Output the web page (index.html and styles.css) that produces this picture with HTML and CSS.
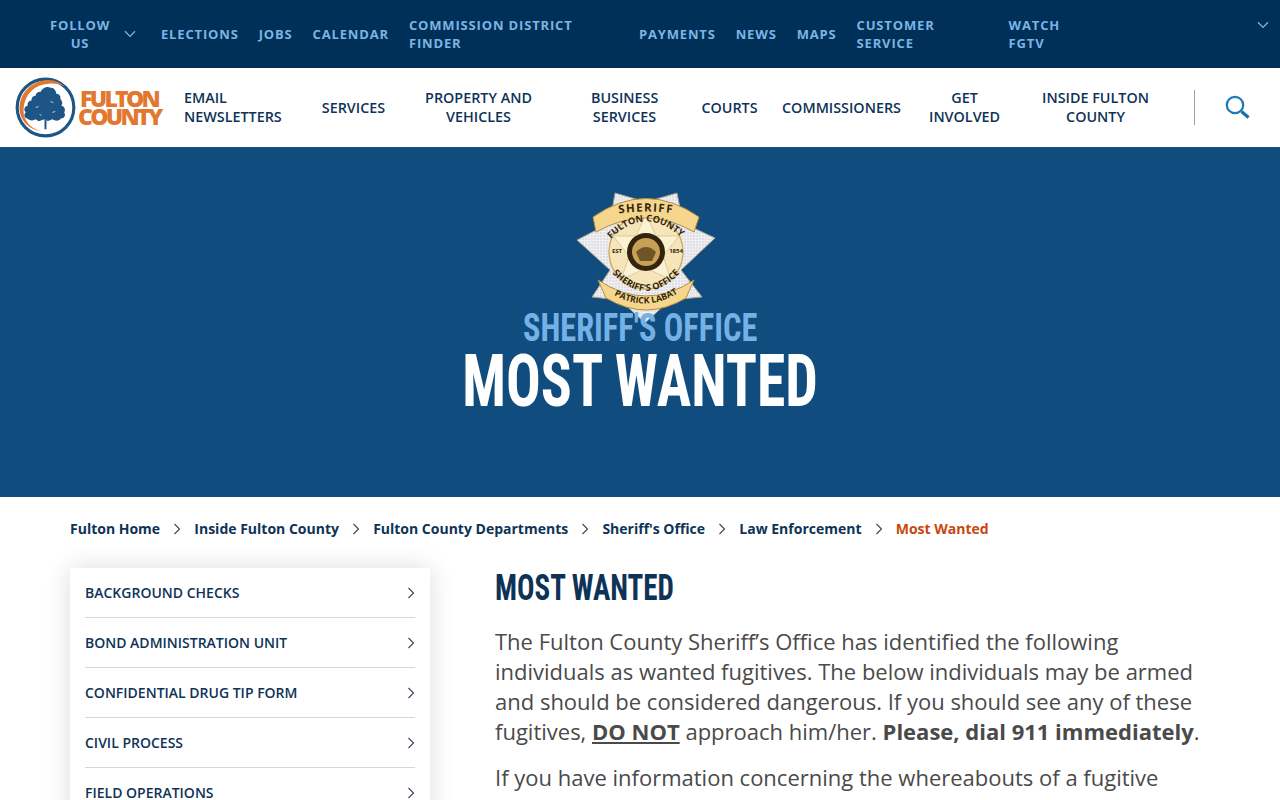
FILE: index.html
```html
<!DOCTYPE html>
<html lang="en">
<head>
<meta charset="utf-8">
<title>Most Wanted</title>
<link rel="stylesheet" href="styles.css">
</head>
<body>
<div class="topbar">
  <a class="top-item follow">FOLLOW<br>US</a>
  <svg class="chev-down follow-chev" viewBox="0 0 12 8"><path d="M1 1.2 6 6.4 11 1.2"/></svg>
  <a class="top-item">ELECTIONS</a>
  <a class="top-item">JOBS</a>
  <a class="top-item">CALENDAR</a>
  <a class="top-item w-commission">COMMISSION DISTRICT FINDER</a>
  <a class="top-item">PAYMENTS</a>
  <a class="top-item">NEWS</a>
  <a class="top-item">MAPS</a>
  <a class="top-item w-customer">CUSTOMER<br>SERVICE</a>
  <a class="top-item">WATCH<br>FGTV</a>
  <svg class="chev-down end-chev" viewBox="0 0 12 8"><path d="M1 1.2 6 6.4 11 1.2"/></svg>
</div>
<header class="mainnav">
  <a class="logo">
    <svg class="logo-mark" viewBox="0 0 62 62">
      <circle cx="31" cy="31" r="28.8" fill="none" stroke="#1d5587" stroke-width="3.2"/>
      <path d="M5 36C2 19 16 3 34 3 41 3 47 6 51 10 45 7 39 6 33 7 17 8 7 22 9 38 11 47 18 53 27 55 17 54 7 47 5 36Z" fill="#e2772f"/>
      <path d="M30 53V43L24 45 21 43C18 45 14 44 12 42 9 41 9 37 11 36 8 33 10 30 13 29 12 26 15 24 17 24 16 21 19 19 21 19 21 16 24 15 26 15 28 11 33 9 36 11 39 10 42 14 42 17 45 17 47 20 46 22 48 24 49 27 47 29 50 30 52 33 50 36 52 39 50 42 47 42 45 45 41 45 38 43L33 45 32 43V53Z" fill="#1d5587"/>
      <path d="M21 31l3-1M36 25l3 1M25 38l2 1M38 36l3-1" stroke="#fff" stroke-width=".7"/>
    </svg>
    <span class="logo-text">FULTON<br><span class="logo-line2">COUNTY</span></span>
  </a>
  <a class="nav-item nav-email">EMAIL<br>NEWSLETTERS</a>
  <a class="nav-item nav-single nav-services">SERVICES</a>
  <a class="nav-item nav-property">PROPERTY AND<br>VEHICLES</a>
  <a class="nav-item nav-business">BUSINESS<br>SERVICES</a>
  <a class="nav-item nav-single nav-courts">COURTS</a>
  <a class="nav-item nav-single nav-comm">COMMISSIONERS</a>
  <a class="nav-item nav-get">GET<br>INVOLVED</a>
  <a class="nav-item nav-inside">INSIDE FULTON<br>COUNTY</a>
  <span class="nav-divider"></span>
  <svg class="search" viewBox="0 0 26 26"><circle cx="10" cy="10" r="8.2" fill="none" stroke="#1b7ab8" stroke-width="2.2"/><path d="M16.5 16.5 23.5 22.5" stroke="#1b6ea6" stroke-width="3.2" fill="none"/></svg>
</header>
<section class="hero">
  <svg class="badge" viewBox="0 0 140 134">
    <defs>
      <pattern id="speck" width="3" height="3" patternUnits="userSpaceOnUse"><rect width="3" height="3" fill="#f0f0f3"/><circle cx="1" cy="1" r=".7" fill="#c2c4cc"/></pattern>
      <path id="t1" d="M39 24Q70 19 101 24"/>
      <path id="t2" d="M34 50Q68 14 106 48"/>
      <path id="t3" d="M30 76Q70 126 110 76"/>
      <path id="t4" d="M38 105Q70 123 102 103"/>
    </defs>
    <polygon points="39,3 70,12 101,3 107,33 139,48 105,80 126,107 94,110 69,133 44,110 16,107 34,80 1,50 34,33" fill="url(#speck)" stroke="#a89f8b" stroke-width="1"/>
    <circle cx="70" cy="62" r="37" fill="#f6e5b8" stroke="#cfac66" stroke-width="1.5"/>
    <polygon points="70,24 80,46 103,46 87,66 95,90 70,78 45,90 53,66 37,46 60,46" fill="#fbf1d3" stroke="#dcc289" stroke-width=".8"/>
    <path d="M20 42 17 27Q70 -10 123 27L118 42Q70 14 20 42Z" fill="#f5d68c" stroke="#b08c45"/>
    <path d="M22 90 30 108Q70 132 110 108L118 90Q70 122 22 90Z" fill="#f5d68c" stroke="#b08c45"/>
    <circle cx="70" cy="62" r="19" fill="#33240d"/>
    <circle cx="70" cy="62" r="14" fill="#c8a055"/>
    <path d="M60 62Q70 52 80 62L76 71H64Z" fill="#6d5526"/>
    <text class="badge-t b1"><textPath href="#t1" startOffset="50%">SHERIFF</textPath></text>
    <text class="badge-t b2"><textPath href="#t2" startOffset="50%">FULTON COUNTY</textPath></text>
    <text class="badge-t b2"><textPath href="#t3" startOffset="50%">SHERIFF'S OFFICE</textPath></text>
    <text class="badge-t b3"><textPath href="#t4" startOffset="50%">PATRICK LABAT</textPath></text>
    <text class="badge-t b4" x="41" y="63">EST</text>
    <text class="badge-t b4" x="100" y="63">1854</text>
  </svg>
  <div class="hero-sub">SHERIFF'S OFFICE</div>
  <div class="hero-title">MOST WANTED</div>
</section>
<nav class="crumbs">
  <a>Fulton Home</a><svg class="chev" viewBox="0 0 8 12"><path d="M1.5 1 6.5 6 1.5 11"/></svg>
  <a>Inside Fulton County</a><svg class="chev" viewBox="0 0 8 12"><path d="M1.5 1 6.5 6 1.5 11"/></svg>
  <a>Fulton County Departments</a><svg class="chev" viewBox="0 0 8 12"><path d="M1.5 1 6.5 6 1.5 11"/></svg>
  <a>Sheriff's Office</a><svg class="chev" viewBox="0 0 8 12"><path d="M1.5 1 6.5 6 1.5 11"/></svg>
  <a>Law Enforcement</a><svg class="chev" viewBox="0 0 8 12"><path d="M1.5 1 6.5 6 1.5 11"/></svg>
  <a class="current">Most Wanted</a>
</nav>
<main class="content">
  <aside class="side">
    <a class="side-item">BACKGROUND CHECKS<svg class="chev" viewBox="0 0 8 12"><path d="M1.5 1 6.5 6 1.5 11"/></svg></a>
    <a class="side-item">BOND ADMINISTRATION UNIT<svg class="chev" viewBox="0 0 8 12"><path d="M1.5 1 6.5 6 1.5 11"/></svg></a>
    <a class="side-item">CONFIDENTIAL DRUG TIP FORM<svg class="chev" viewBox="0 0 8 12"><path d="M1.5 1 6.5 6 1.5 11"/></svg></a>
    <a class="side-item">CIVIL PROCESS<svg class="chev" viewBox="0 0 8 12"><path d="M1.5 1 6.5 6 1.5 11"/></svg></a>
    <a class="side-item">FIELD OPERATIONS<svg class="chev" viewBox="0 0 8 12"><path d="M1.5 1 6.5 6 1.5 11"/></svg></a>
  </aside>
  <article class="body">
    <h1>MOST WANTED</h1>
    <p>The Fulton County Sheriff’s Office has identified the following individuals as wanted fugitives. The below individuals may be armed and should be considered dangerous. If you should see any of these fugitives, <strong><u>DO NOT</u></strong> approach him/her. <strong>Please, dial 911 immediately</strong>.</p>
    <p>If you have information concerning the whereabouts of a fugitive named on this website, it may be submitted anonymously through the Sheriff's Office.</p>
  </article>
</main>
</body>
</html>
```
FILE: styles.css
```css
* { box-sizing: border-box; }
html, body { margin: 0; height: 800px; overflow: hidden; }
body { font-family: "Open Sans", sans-serif; color: #4a4a4a; background: #fff; }
a { color: inherit; text-decoration: none; }

.topbar { height: 68px; background: #003058; padding: 0 10px 0 50px; display: flex; align-items: center; gap: 20px; position: relative; }
.top-item { font-size: 13px; font-weight: 700; line-height: 18px; letter-spacing: .84px; color: #7cb4e2; white-space: normal; }
.follow { text-align: center; width: 60px; flex: none; }
.follow-chev { margin-left: -6px; margin-right: 5px; }
.chev-down { width: 12px; height: 8px; fill: none; stroke: #7cb4e2; stroke-width: 1.3; flex: none; }
.end-chev { position: absolute; right: 11px; top: 21px; }
.w-commission { width: 210px; flex: none; }
.w-customer { width: 132px; flex: none; }

.mainnav { height: 80px; border-bottom: 1px solid #1d5587; display: flex; align-items: center; padding-left: 15px; background: #fff; }
.logo { display: flex; align-items: center; width: 169px; flex: none; }
.logo-mark { width: 61px; height: 61px; flex: none; }
.logo-text { font-family: "Open Sans", sans-serif; font-weight: 800; font-size: 23px; line-height: 18px; letter-spacing: -2.7px; color: #e2772f; margin: -2px 0 0 4px; white-space: nowrap; }
.logo-line2 { margin-left: -2px; }
.nav-item { font-size: 14.35px; font-weight: 600; line-height: 18.5px; color: #0e3357; text-align: center; flex: none; white-space: nowrap; }
.nav-single { padding-top: 2px; }
.nav-email { text-align: left; width: 137.5px; }
.nav-services { width: 64px; }
.nav-property { width: 107px; margin-left: 39.5px; }
.nav-business { width: 67px; margin-left: 59px; }
.nav-courts { width: 57px; margin-left: 43px; }
.nav-comm { width: 119px; margin-left: 24px; }
.nav-get { width: 71px; margin-left: 28px; }
.nav-inside { width: 107px; margin-left: 42px; }
.nav-divider { width: 1px; height: 35px; background: #9aa0a6; margin-left: 44.5px; flex: none; }
.search { width: 26px; height: 26px; margin-left: 30px; flex: none; }

.hero { height: 349px; background: #104c7d; display: flex; flex-direction: column; align-items: center; padding-top: 42px; }
.badge { width: 140px; height: 134px; flex: none; margin-left: 12px; }
.badge-t { font-family: "Open Sans", sans-serif; font-weight: 700; fill: #33280f; text-anchor: middle; }
.b1 { font-size: 11.5px; letter-spacing: 1.3px; }
.b2 { font-size: 9.3px; }
.b3 { font-size: 8.8px; }
.b4 { font-size: 6px; }
.hero-sub, .hero-title, h1 { font-family: "Liberation Sans Narrow", "Roboto Condensed", "Liberation Sans", sans-serif; white-space: nowrap; }
.hero-sub { font-size: 39px; line-height: 44px; font-weight: 700; color: #74b1e6; margin-top: -18px; transform: scaleX(.83); position: relative; }
.hero-title { font-size: 73px; line-height: 76px; font-weight: 700; color: #fff; margin-top: -7px; transform: scaleX(.79); }

.crumbs { display: flex; align-items: center; padding: 0 70px; height: 63px; font-size: 14px; font-weight: 700; color: #0e3357; }
.crumbs .chev { margin: 0 13.2px 0 13px; }
.crumbs .current { color: #c8470f; }
.chev { width: 8px; height: 12px; fill: none; stroke: #33475b; stroke-width: 1.1; flex: none; }

.content { display: grid; grid-template-columns: 360px 725px; column-gap: 65px; padding: 8px 0 0 70px; }
.side { background: #fff; box-shadow: 0 0 24px rgba(0,0,0,.14); padding: 0 15px; height: 400px; }
.side-item { display: flex; justify-content: space-between; align-items: center; height: 50px; border-bottom: 1px solid #d5d7da; font-size: 14px; font-weight: 600; color: #0e3357; }
.body h1 { margin: 0 0 18px; font-size: 36.5px; line-height: 40px; font-weight: 700; color: #0e3357; transform: scaleX(.795); transform-origin: left center; }
.body p { margin: 0 0 16px; font-size: 22px; line-height: 30px; }
.body strong { font-weight: 700; }
```
